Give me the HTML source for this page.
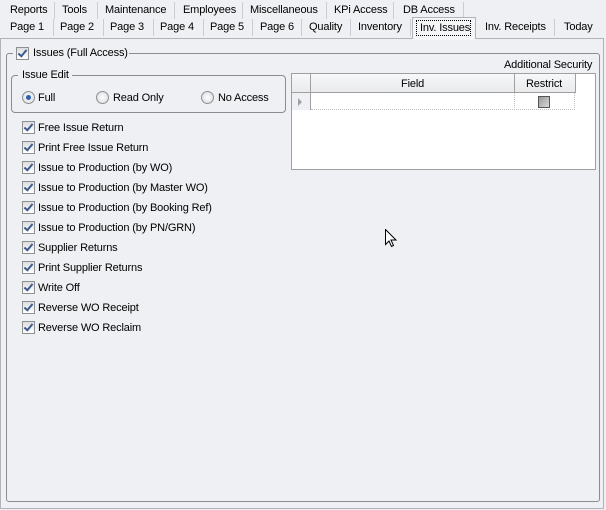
<!DOCTYPE html>
<html><head><style>
body{margin:0;width:606px;height:510px;background:#eef0f3;font-family:"Liberation Sans",sans-serif;font-size:11px;letter-spacing:-0.15px;color:#000;position:relative;overflow:hidden}
.a{position:absolute;white-space:nowrap}
.t{position:absolute;height:17px;line-height:16px;border-right:1px solid #c9ccd2;box-sizing:border-box}
.cb{position:absolute;width:11px;height:11px;border:1px solid #8e8f8f;background:linear-gradient(#dcdde0,#fff)}
.cb:after{content:"";position:absolute;left:3px;top:0px;width:3px;height:7px;border:solid #3c5a90;border-width:0 2px 2px 0;transform:rotate(40deg)}
.rb{position:absolute;width:11px;height:11px;border:1px solid #8e8f8f;border-radius:50%;background:radial-gradient(#fff,#d5d7db)}
</style></head><body>
<div class="t" style="left:4px;top:2px;width:51px;padding-left:6px">Reports</div>
<div class="t" style="left:55px;top:2px;width:43px;padding-left:7px">Tools</div>
<div class="t" style="left:98px;top:2px;width:77px;padding-left:7px">Maintenance</div>
<div class="t" style="left:175px;top:2px;width:68px;padding-left:8px">Employees</div>
<div class="t" style="left:243px;top:2px;width:84px;padding-left:7px">Miscellaneous</div>
<div class="t" style="left:327px;top:2px;width:67px;padding-left:7px">KPi Access</div>
<div class="t" style="left:394px;top:2px;width:70px;padding-left:9px">DB Access</div>
<div class="t" style="left:4px;top:19px;width:50px;padding-left:6px">Page 1</div>
<div class="t" style="left:54px;top:19px;width:50px;padding-left:6px">Page 2</div>
<div class="t" style="left:104px;top:19px;width:50px;padding-left:6px">Page 3</div>
<div class="t" style="left:154px;top:19px;width:50px;padding-left:6px">Page 4</div>
<div class="t" style="left:204px;top:19px;width:49px;padding-left:6px">Page 5</div>
<div class="t" style="left:253px;top:19px;width:49px;padding-left:7px">Page 6</div>
<div class="t" style="left:302px;top:19px;width:49px;padding-left:7px">Quality</div>
<div class="t" style="left:351px;top:19px;width:60px;padding-left:7px">Inventory</div>
<div class="a" style="left:412px;top:17px;width:62px;height:21px;background:#f4f5f7;border:1px solid #b0b4ba;border-bottom:none"></div>
<div class="a" style="left:416px;top:20px;width:55px;height:16px;line-height:15px;border:1px dotted #000;padding-left:3px;box-sizing:border-box">Inv. Issues</div>
<div class="t" style="left:478px;top:19px;width:77px;padding-left:7px">Inv. Receipts</div>
<div class="t" style="left:555px;top:19px;width:45px;padding-left:9px;border:none">Today</div>
<div class="a" style="left:0;top:38px;width:602px;height:469px;border:1px solid #b0b4ba;background:#eef0f3"></div>
<div class="a" style="left:413px;top:38px;width:62px;height:2px;background:#f4f5f7"></div>
<div class="a" style="left:6px;top:53px;width:592px;height:447px;border:1px solid #8a8c90;border-radius:3px"></div>
<div class="a" style="left:13px;top:46px;width:116px;height:14px;background:#eef0f3"></div>
<div class="cb" style="left:16px;top:47px"></div>
<div class="a" style="left:33px;top:47px">Issues (Full Access)</div>
<div class="a" style="left:11px;top:75px;width:273px;height:36px;border:1px solid #8a8c90;border-radius:4px"></div>
<div class="a" style="left:18px;top:68px;width:54px;height:14px;background:#eef0f3"></div>
<div class="a" style="left:22px;top:69px">Issue Edit</div>
<div class="rb" style="left:22px;top:91px"></div><div class="a" style="left:26px;top:95px;width:5px;height:5px;border-radius:50%;background:#2b5fb0"></div>
<div class="a" style="left:38px;top:92px">Full</div>
<div class="rb" style="left:96px;top:91px"></div><div class="a" style="left:113px;top:92px">Read Only</div>
<div class="rb" style="left:201px;top:91px"></div><div class="a" style="left:218px;top:92px">No Access</div>
<div class="cb" style="left:22px;top:121px"></div><div class="a" style="left:38px;top:122px">Free Issue Return</div>
<div class="cb" style="left:22px;top:141px"></div><div class="a" style="left:38px;top:142px">Print Free Issue Return</div>
<div class="cb" style="left:22px;top:161px"></div><div class="a" style="left:38px;top:162px">Issue to Production (by WO)</div>
<div class="cb" style="left:22px;top:181px"></div><div class="a" style="left:38px;top:182px">Issue to Production (by Master WO)</div>
<div class="cb" style="left:22px;top:201px"></div><div class="a" style="left:38px;top:202px">Issue to Production (by Booking Ref)</div>
<div class="cb" style="left:22px;top:221px"></div><div class="a" style="left:38px;top:222px">Issue to Production (by PN/GRN)</div>
<div class="cb" style="left:22px;top:241px"></div><div class="a" style="left:38px;top:242px">Supplier Returns</div>
<div class="cb" style="left:22px;top:261px"></div><div class="a" style="left:38px;top:262px">Print Supplier Returns</div>
<div class="cb" style="left:22px;top:281px"></div><div class="a" style="left:38px;top:282px">Write Off</div>
<div class="cb" style="left:22px;top:301px"></div><div class="a" style="left:38px;top:302px">Reverse WO Receipt</div>
<div class="cb" style="left:22px;top:321px"></div><div class="a" style="left:38px;top:322px">Reverse WO Reclaim</div>
<div class="a" style="left:504px;top:59px">Additional Security</div>
<div class="a" style="left:291px;top:73px;width:303px;height:95px;border:1px solid #a0a0a0;background:#fff"></div>
<div class="a" style="left:292px;top:74px;width:283px;height:18px;background:linear-gradient(#f7f8fa,#e9eaec);border-bottom:1px solid #a0a0a0"></div>
<div class="a" style="left:310px;top:74px;width:1px;height:19px;background:#a0a0a0"></div>
<div class="a" style="left:514px;top:74px;width:1px;height:19px;background:#a0a0a0"></div>
<div class="a" style="left:575px;top:74px;width:1px;height:19px;background:#a0a0a0"></div>
<div class="a" style="left:401px;top:78px">Field</div>
<div class="a" style="left:526px;top:78px">Restrict</div>
<div class="a" style="left:292px;top:93px;width:18px;height:17px;background:#eef0f3;border-right:1px solid #a0a0a0"></div>
<div class="a" style="left:298px;top:98px;width:0;height:0;border-left:4px solid #a0a0a0;border-top:4px solid transparent;border-bottom:4px solid transparent"></div>
<div class="a" style="left:311px;top:93px;width:263px;height:16px;border-bottom:1px dotted #c0c0c0;border-right:1px dotted #c0c0c0"></div>
<div class="a" style="left:514px;top:93px;width:1px;height:17px;border-left:1px dotted #c0c0c0"></div>
<div class="a" style="left:538px;top:96px;width:10px;height:10px;border:1px solid #555;background:linear-gradient(135deg,#999,#d8d8d8)"></div>
<svg class="a" style="left:385px;top:229px" width="13" height="20" viewBox="0 0 13 20"><path d="M0.5 0.5V15.5L4 12L6.5 17.5L8.5 16.5L6 11H11Z" fill="#fff" stroke="#000"/></svg>
</body></html>
